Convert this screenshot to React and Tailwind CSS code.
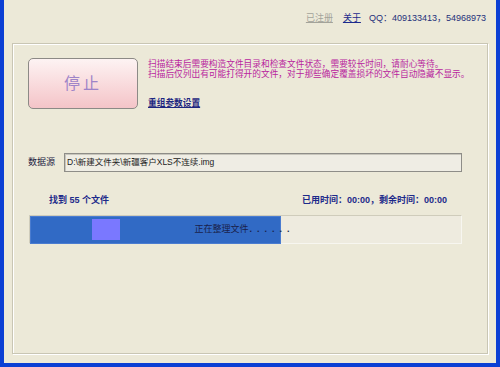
import React from "react";

const cjk = { fontFamily: '"Liberation Sans", "Noto Sans CJK SC", sans-serif' };

export default function App() {
  return (
    <div
      className="w-[500px] h-[367px] bg-[#ece9d8] border-l-[4px] border-r-[4px] border-b-[4px] border-[#0b3fd4] flex flex-col"
      style={cjk}
    >
      {/* top links */}
      <div className="h-[43px] flex items-start justify-end pt-[12px] pr-[10px] text-[9px] leading-[12px]">
        <span className="text-[#a3a39a] underline">已注册</span>
        <span className="ml-[10px] text-[#1c2a8c] underline">关于</span>
        <span className="ml-[8px] text-[#24307a]">QQ：409133413，54968973</span>
      </div>

      {/* group box */}
      <div className="mx-[8px] flex-1 mb-[9px] border border-[#c9c6b4] shadow-[inset_1px_1px_0_#ffffff,1px_1px_0_#ffffff] flex flex-col pt-[14px] pl-[15px] pr-[25px]">
        <div className="flex">
          <button className="shrink-0 w-[110px] h-[51px] rounded-[5px] border border-[#8c8a86] bg-gradient-to-b from-[#fdf3f3] to-[#f4c4c8] text-[#9e84c8] text-[16px] tracking-[3px]">
            停止
          </button>
          <div className="ml-[10px] pt-[2px] text-[8.7px] leading-[9.5px] text-[#b8249e] whitespace-nowrap">
            <div>扫描结束后需要构造文件目录和检查文件状态，需要较长时间，请耐心等待。</div>
            <div>扫描后仅列出有可能打得开的文件，对于那些确定覆盖损坏的文件自动隐藏不显示。</div>
            <div className="mt-[20px] text-[#1c2680] underline font-bold">重组参数设置</div>
          </div>
        </div>

        <div className="flex items-center mt-[44px]">
          <span className="w-[36px] text-[9px] text-[#202040]">数据源</span>
          <div className="w-[398px] h-[19px] border border-[#8e8d88] shadow-[inset_1px_1px_0_#c8c6bc] bg-[#efede4] flex items-center pl-[2px] text-[8.5px] text-[#222222]">
            D:\新建文件夹\新疆客户XLS不连续.img
          </div>
        </div>

        <div className="flex justify-between mt-[22px] pl-[21px] pr-[15px] text-[9px] leading-[12px] font-bold text-[#1d2a8a]">
          <span>找到 55 个文件</span>
          <span>已用时间：00:00，剩余时间：00:00</span>
        </div>

        <div className="relative mt-[9px] ml-[1px] w-[433px] h-[29px] border-t border-l border-[#cfccbb] border-r border-b border-r-[#f7f6f0] border-b-[#f7f6f0] bg-[#eeebdf]">
          <div className="absolute left-0 top-0 w-[251px] h-[28px] bg-[#316ac5] border border-[#4a7cd0]">
            <div className="absolute left-[61px] top-[2px] w-[28px] h-[21px] bg-[#7a78ff]" />
          </div>
          <div className="absolute inset-0 flex items-center justify-center pr-[2px] text-[9px] text-[#1a1f4a]">
            正在整理文件<span className="font-bold tracking-[5px] ml-[1px]">......</span>
          </div>
        </div>
      </div>
    </div>
  );
}
